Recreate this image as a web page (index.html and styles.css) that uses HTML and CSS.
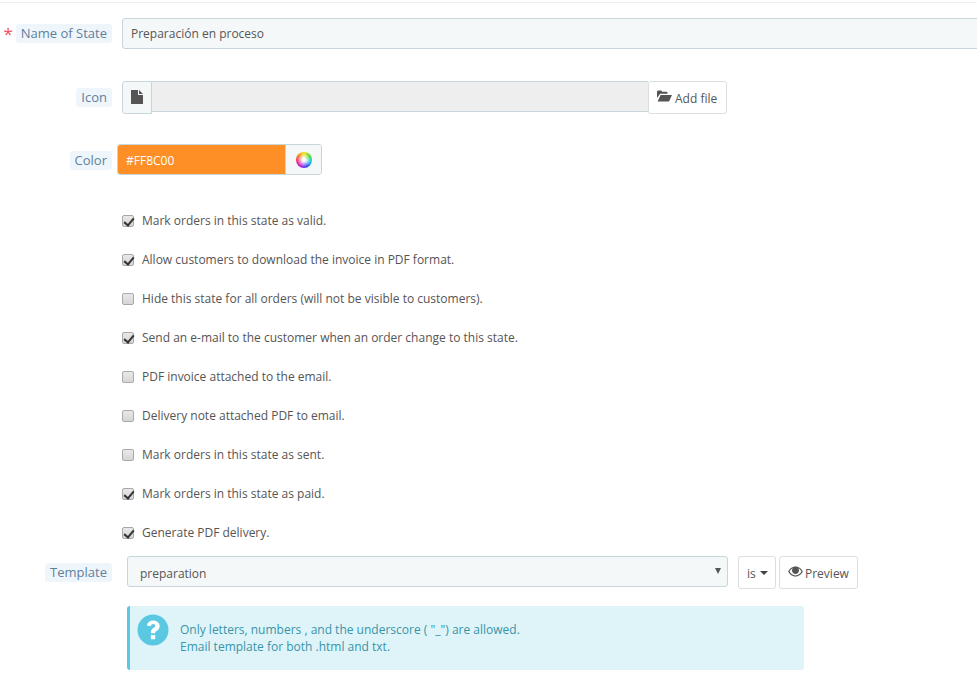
FILE: index.html
```html
<!DOCTYPE html>
<html lang="en">
<head>
<meta charset="utf-8">
<title>Order state</title>
<link rel="stylesheet" href="styles.css">
</head>
<body>
<div class="top-rule"></div>
<form class="form">
  <div class="row row-name">
    <div class="label-col"><span class="req">*</span><span class="lbl">Name of State</span></div>
    <div class="text-input">Preparación en proceso</div>
  </div>
  <div class="row row-icon">
    <div class="label-col"><span class="lbl">Icon</span></div>
    <div class="file-group">
      <span class="file-addon"><svg width="13" height="14" viewBox="0 0 13 14"><path d="M0 0h7v5h5v9H0zM8 0l4 4H8z" fill="#555"/></svg></span>
      <span class="file-field"></span>
      <span class="btn btn-add"><svg class="folder" width="15" height="12" viewBox="0 0 15 12"><path d="M0 11V1.500L.8.500h3.400l1 1.200h4.600l.7.800v1.200H3.200L0 8zM.6 11.500l3-6.500H15l-3 6.500z" fill="#555"/></svg>Add file</span>
    </div>
  </div>
  <div class="row row-color">
    <div class="label-col"><span class="lbl lbl-color">Color</span></div>
    <div class="color-group">
      <span class="color-value">#FF8C00</span>
      <span class="color-addon"><span class="wheel"></span></span>
    </div>
  </div>
  <div class="checks">
    <label class="check"><span class="box on"></span>Mark orders in this state as valid.</label>
    <label class="check"><span class="box on"></span>Allow customers to download the invoice in PDF format.</label>
    <label class="check"><span class="box"></span>Hide this state for all orders (will not be visible to customers).</label>
    <label class="check"><span class="box on"></span>Send an e-mail to the customer when an order change to this state.</label>
    <label class="check"><span class="box"></span>PDF invoice attached to the email.</label>
    <label class="check"><span class="box"></span>Delivery note attached PDF to email.</label>
    <label class="check"><span class="box"></span>Mark orders in this state as sent.</label>
    <label class="check"><span class="box on"></span>Mark orders in this state as paid.</label>
    <label class="check"><span class="box on"></span>Generate PDF delivery.</label>
  </div>
  <div class="row row-template">
    <div class="label-col label-mid"><span class="lbl">Template</span></div>
    <div class="select">preparation<span class="select-arrow"></span></div>
    <span class="btn btn-lang">is<span class="caret"></span></span>
    <span class="btn btn-preview"><svg class="eye" width="15" height="11" viewBox="0 0 15 11"><path fill-rule="evenodd" d="M7.500.5C11 .5 13.600 3 14.800 5.500 13.600 8 11 10.500 7.500 10.500S1.400 8 .2 5.500C1.400 3 4 .5 7.500.5zM1.500 5.500C2.700 7.600 4.900 9.400 7.500 9.400S12.300 7.600 13.500 5.500C12.700 4 11.500 2.900 10.200 2.200 10.700 2.800 11 3.600 11 4.500 11 6.400 9.400 8 7.500 8S4 6.400 4 4.500C4 3.600 4.300 2.800 4.800 2.200 3.500 2.900 2.300 4 1.500 5.500z" fill="#555"/></svg>Preview</span>
  </div>
  <div class="alert">
    <svg class="help" width="32" height="32" viewBox="0 0 32 32"><circle cx="16" cy="16" r="15.500" fill="#5bc8e2"/><path d="M9.800 11.500C10.500 8.300 13 6.500 16.300 6.500c3.500 0 6.400 2.400 6.400 5.600 0 2.700-1.600 3.900-3.200 5-1 .7-1.300 1.100-1.300 2.200h-4.300v-1c0-2.200 1-3.300 2.500-4.300 1.200-.8 1.900-1.300 1.900-2.300 0-1.100-1-1.800-2.100-1.800-1.300 0-2.100.8-2.400 2.300zM13.900 21h4.300v4.200h-4.300z" fill="#fff"/></svg>
    <p class="alert-text">Only letters, numbers , and the underscore ( "_") are allowed.<br>Email template for both .html and txt.</p>
  </div>
</form>
</body>
</html>
```
FILE: styles.css
```css
* { box-sizing: border-box; }
html, body { margin: 0; padding: 0; }
body {
  width: 977px;
  height: 688px;
  overflow: hidden;
  background: #fff;
  font-family: "Open Sans", sans-serif;
  font-size: 12px;
  line-height: 17px;
  color: #555;
}
.top-rule { height: 3px; border-bottom: 1px solid #eee; margin-top: 0; }
.form { padding-top: 15px; }
.row { display: flex; align-items: center; }
.label-col {
  width: 112px;
  flex: none;
  display: flex;
  justify-content: flex-end;
  align-items: center;
}
.lbl {
  background: #eff6fb;
  border-radius: 3px;
  padding: 1px 5px;
  color: #5f7f9d;
  font-size: 13px;
  line-height: 17px;
}
.lbl-color { margin-top: 2px; }
.req { color: #f54c5d; font-size: 17px; margin-right: 3px; line-height: 17px; }
.text-input {
  margin-left: 10px;
  flex: 1;
  height: 31px;
  margin-right: -10px;
  padding: 6px 8px;
  background: #f5f8f9;
  border: 1px solid #c7d6db;
  border-radius: 3px 0 0 3px;
  color: #555;
}
.row-icon { margin-top: 32px; }
.file-group { margin-left: 10px; display: flex; }
.file-addon {
  width: 30px;
  height: 33px;
  background: #f5f8f9;
  border: 1px solid #c7d6db;
  border-right-width: 1px;
  border-radius: 3px 0 0 3px;
  display: flex;
  align-items: center;
  justify-content: center;
  padding-bottom: 1px;
}
.file-field {
  width: 496px;
  height: 31px;
  background: #eee;
  border-top: 1px solid #c7d6db;
  border-bottom: 1px solid #c7d6db;
}
.btn {
  display: inline-flex;
  align-items: center;
  background: #fff;
  border: 1px solid #dcdfe1;
  border-radius: 3px;
  color: #555;
}
.btn-add { width: 79px; height: 33px; padding: 1px 0 0 8px; }
.folder { margin-right: 3px; margin-top: -4px; }
.row-color { margin-top: 30px; }
.color-group {
  margin-left: 5px;
  display: flex;
  height: 31px;
  border: 1px solid #c7d6db;
  border-radius: 3px;
  overflow: hidden;
}
.color-value {
  width: 167px;
  background: #fd8f26;
  color: #fff;
  padding: 7px 8px 5px;
}
.color-addon {
  width: 36px;
  padding-left: 1px;
  background: #f5f8f9;
  border-left: 1px solid #c7d6db;
  display: flex;
  align-items: center;
  justify-content: center;
}
.wheel {
  width: 16px;
  height: 16px;
  border-radius: 50%;
  background:
    radial-gradient(circle, #fff 0 12%, rgba(255,255,255,0) 62%),
    conic-gradient(#f6e61e, #4fd92e, #19c8e0, #2a4cf0, #b41fe0, #f0287a, #f5801a, #f6e61e);
}
.checks { margin-top: 37px; padding-left: 122px; display: flex; flex-direction: column; gap: 22px; }
.check { display: flex; align-items: center; height: 17px; }
.box {
  width: 12px;
  height: 12px;
  margin-right: 8px;
  border: 1px solid #a9a9a9;
  border-radius: 2px;
  background: linear-gradient(#e8e8e8, #d6d6d6);
  position: relative;
  flex: none;
}
.box.on::after {
  content: "";
  position: absolute;
  left: 3px;
  top: 0;
  width: 4px;
  height: 8px;
  border: solid #333;
  border-width: 0 2px 2px 0;
  transform: rotate(40deg);
}
.row-template { margin-top: 15px; align-items: flex-start; }
.label-mid { align-self: center; }
.select {
  margin-left: 15px;
  width: 601px;
  height: 31px;
  padding: 8px 12px 6px;
  background: #f5f8f9;
  border: 1px solid #c7d6db;
  border-radius: 3px;
  position: relative;
}
.select-arrow {
  position: absolute;
  right: 6px;
  top: 11px;
  border: 3px solid transparent;
  border-top: 6px solid #555;
  border-bottom: 0;
}
.btn-lang { margin-left: 10px; width: 38px; height: 33px; padding: 2px 0 0 8px; }
.caret {
  margin-left: 4px;
  margin-top: -2px;
  border: 4px solid transparent;
  border-top: 4px solid #444;
  border-bottom: 0;
}
.btn-preview { margin-left: 3px; width: 79px; height: 33px; padding: 2px 0 0 8px; }
.eye { margin-right: 2px; margin-top: -4px; }
.alert {
  margin: 17px 0 0 127px;
  width: 677px;
  height: 64px;
  display: flex;
  align-items: center;
  background: #dff4f9;
  border-left: 3px solid #5bc8e2;
  border-radius: 3px;
  padding-left: 7px;
  color: #3795a9;
}
.help { flex: none; margin-top: -16px; }
.alert-text { margin: 0 0 0 11px; }
```
